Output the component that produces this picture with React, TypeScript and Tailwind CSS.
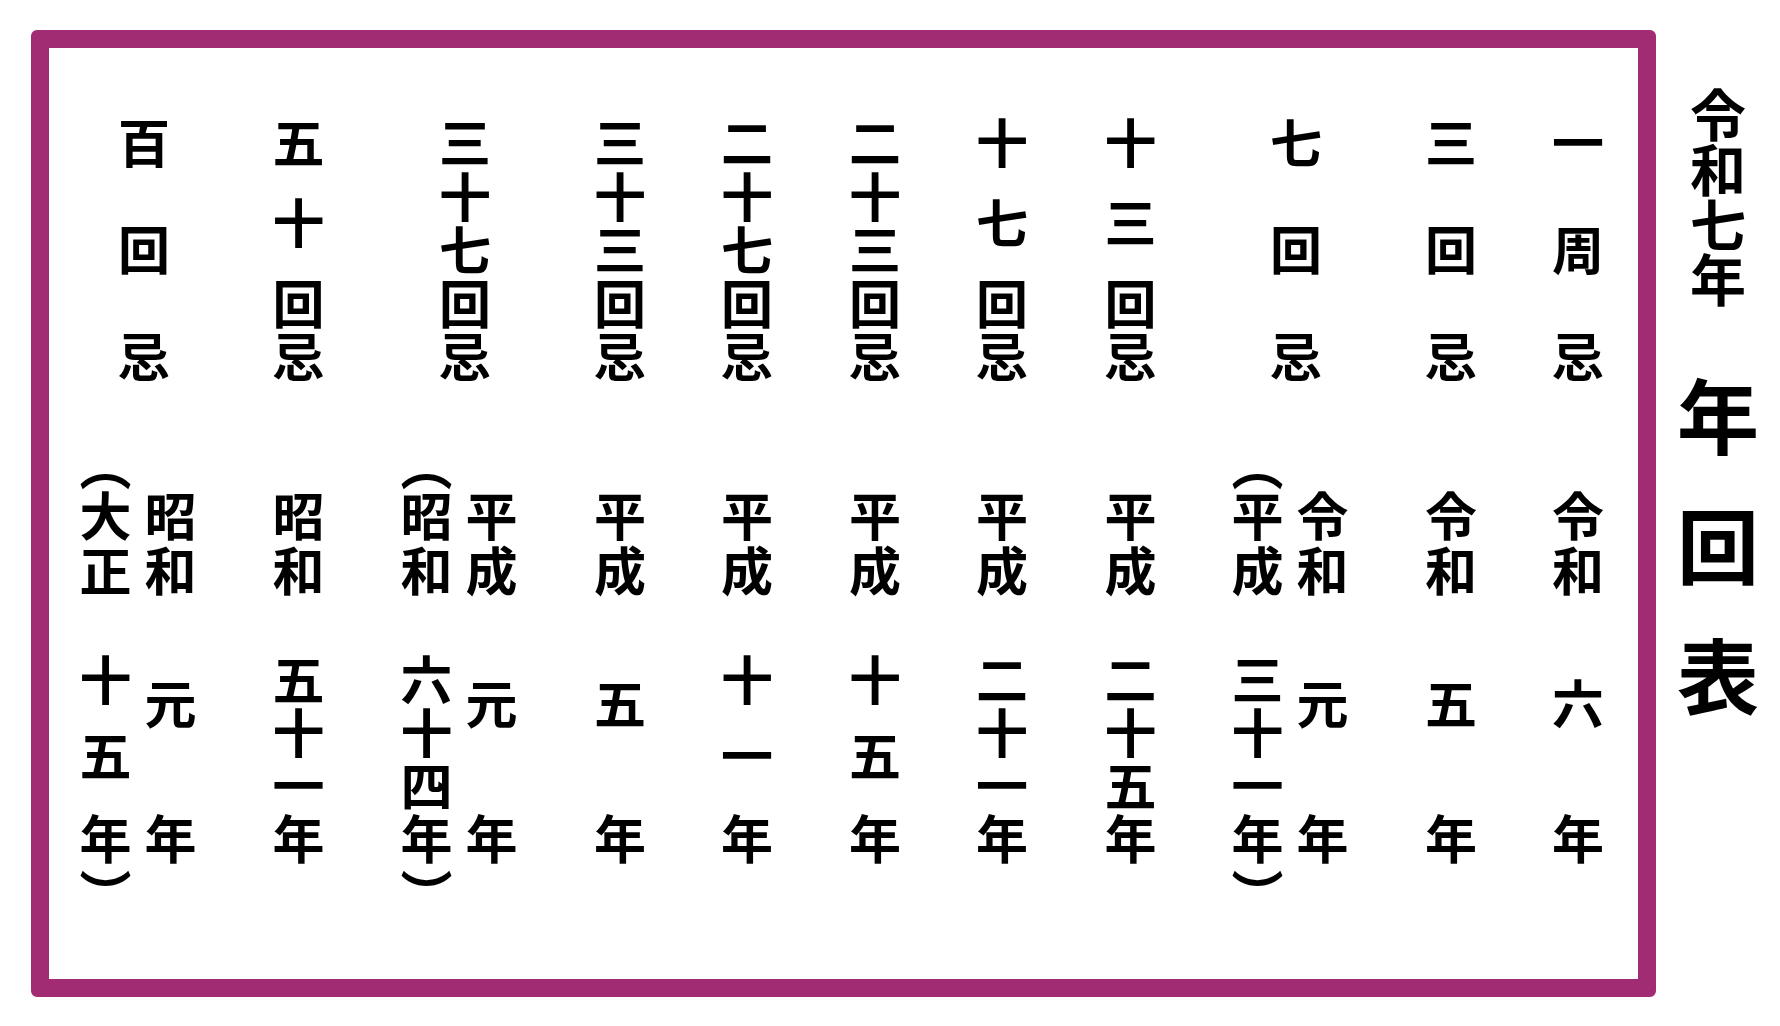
import React from 'react'

type Col = {
  top: string
  ml: string
  eras: { era: string; num: string; paren?: boolean }[]
}

const cols: Col[] = [
  { top: '百回忌', ml: '', eras: [{ era: '大正', num: '十五', paren: true }, { era: '昭和', num: '元' }] },
  { top: '五十回忌', ml: 'ml-[34.5px]', eras: [{ era: '昭和', num: '五十一' }] },
  { top: '三十七回忌', ml: 'ml-[46.5px]', eras: [{ era: '昭和', num: '六十四', paren: true }, { era: '平成', num: '元' }] },
  { top: '三十三回忌', ml: 'ml-[35px]', eras: [{ era: '平成', num: '五' }] },
  { top: '二十七回忌', ml: 'ml-[7px]', eras: [{ era: '平成', num: '十一' }] },
  { top: '二十三回忌', ml: 'ml-[8px]', eras: [{ era: '平成', num: '十五' }] },
  { top: '十七回忌', ml: 'ml-[7px]', eras: [{ era: '平成', num: '二十一' }] },
  { top: '十三回忌', ml: 'ml-[8.5px]', eras: [{ era: '平成', num: '二十五' }] },
  { top: '七回忌', ml: 'ml-[45.5px]', eras: [{ era: '平成', num: '三十一', paren: true }, { era: '令和', num: '元' }] },
  { top: '三回忌', ml: 'ml-[35px]', eras: [{ era: '令和', num: '五' }] },
  { top: '一周忌', ml: 'ml-[7px]', eras: [{ era: '令和', num: '六' }] },
]

// spacing before each char of a 4-char top cell
const fourGap = ['', 'mt-[26.75px]', 'mt-[26.75px]', '']

function TopCell({ text }: { text: string }) {
  const chars = [...text]
  if (chars.length === 3) {
    return (
      <div className="flex h-[267.5px] flex-col justify-between">
        {chars.map((c, i) => (
          <div key={i} className="h-[53.5px] text-center leading-[53.5px]">{c}</div>
        ))}
      </div>
    )
  }
  return (
    <div className="flex h-[267.5px] flex-col">
      {chars.map((c, i) => (
        <div key={i} className={`h-[53.5px] text-center leading-[53.5px] ${chars.length === 4 ? fourGap[i] : ''}`}>
          {c}
        </div>
      ))}
    </div>
  )
}

function Num({ text }: { text: string }) {
  const chars = [...text]
  return (
    <div className="flex h-[159px] flex-col">
      {chars.map((c, i) => (
        <div
          key={i}
          className={`h-[53px] text-center leading-[53px] ${
            chars.length === 1 ? 'mt-[24px]' : chars.length === 2 && i === 1 ? 'mt-[23px]' : ''
          }`}
        >
          {c}
        </div>
      ))}
    </div>
  )
}

function EraCell({ era, num, paren }: { era: string; num: string; paren?: boolean }) {
  return (
    <div className="flex w-[52px] flex-col items-center">
      <div className="h-[30px] leading-[14px]">{paren ? '︵' : ''}</div>
      {[...era].map((c, i) => (
        <div key={i} className="h-[55px] leading-[55px]">{c}</div>
      ))}
      <div className="mt-[55px]">
        <Num text={num} />
      </div>
      <div className="h-[53px] leading-[53px]">年</div>
      {paren && <div className="h-[30px] leading-[60px]">︶</div>}
    </div>
  )
}

export default function App() {
  return (
    <div className="flex h-[1026px] w-[1780px] bg-white font-['Noto_Sans_CJK_JP','Noto_Sans_CJK_SC',sans-serif] font-bold text-black">
      {/* frame */}
      <div className="ml-[31px] mt-[30px] h-[967px] w-[1625px] rounded-[6px] border-[18px] border-[#a22c74] bg-white">
        <div className="flex pl-[35px] pt-[66px] text-[52px]">
          {cols.map((col, i) => (
            <div key={i} className={`flex w-[120px] shrink-0 flex-col items-center ${col.ml}`}>
              <TopCell text={col.top} />
              <div className={`mt-[74.5px] flex justify-center ${col.eras.length > 1 ? 'gap-[13px] pr-[12px]' : ''}`}>
                {col.eras.map((e, j) => (
                  <EraCell key={j} {...e} />
                ))}
              </div>
            </div>
          ))}
        </div>
      </div>

      {/* title */}
      <div className="flex flex-1 flex-col items-center pt-[84px]">
        {[...'令和七年'].map((c, i) => (
          <div key={i} className="h-[55px] text-[56px] leading-[55px]">{c}</div>
        ))}
        <div className="mt-[43.5px] flex flex-col items-center">
          {[...'年回表'].map((c, i) => (
            <div key={i} className="h-[130px] text-[82px] leading-[130px]">{c}</div>
          ))}
        </div>
      </div>
    </div>
  )
}
